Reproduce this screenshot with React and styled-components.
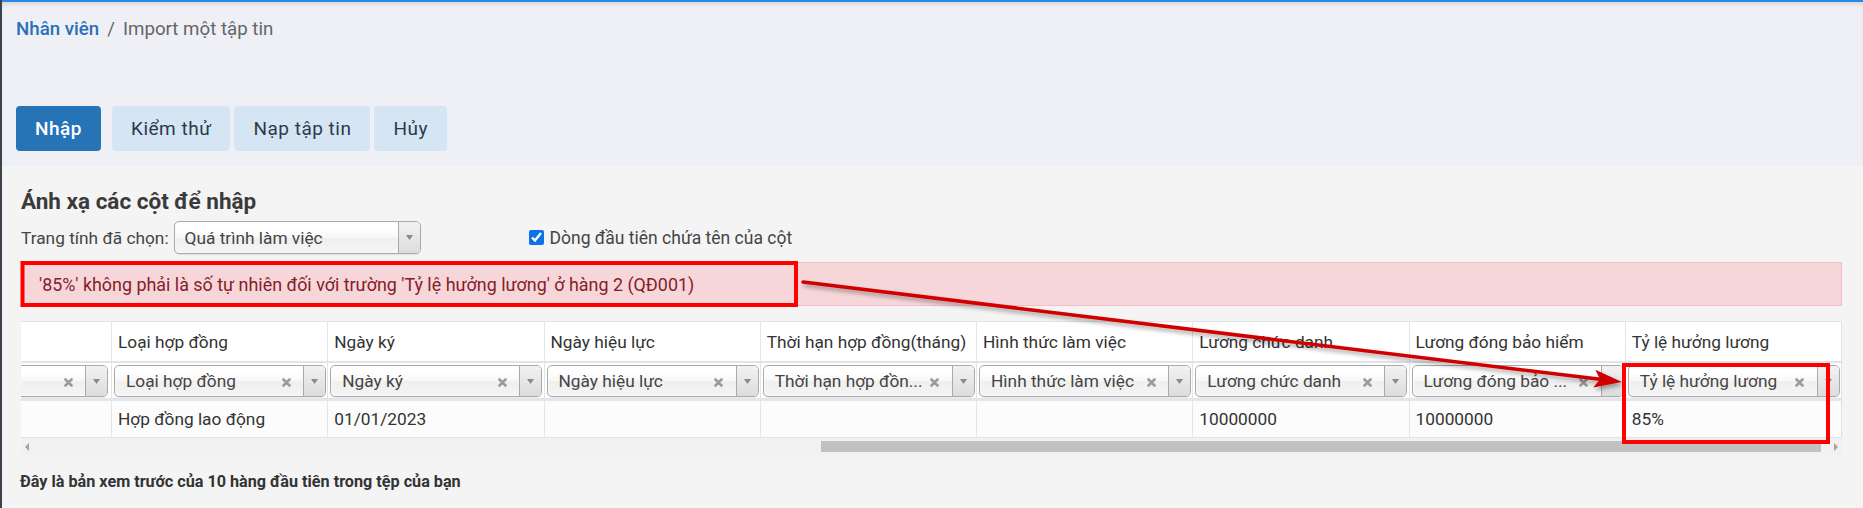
import React from 'react';
import styled, { createGlobalStyle } from 'styled-components';

const GlobalStyle = createGlobalStyle`
  html, body { margin: 0; padding: 0; }
  body {
    width: 1863px;
    height: 508px;
    overflow: hidden;
    background: #f4f4f4;
    font-family: Roboto, "Noto Sans", "Liberation Sans", sans-serif;
    color: #333;
  }
  * { box-sizing: border-box; }
`;

const Page = styled.div`
  position: relative;
  height: 508px;
  border-left: 2px solid #3b434d;
  display: flex;
  flex-direction: column;
`;

const Header = styled.header`
  height: 166px;
  background: #eef0f5;
  border-top: 2px solid #2b8be4;
  box-shadow: inset 0 4px 4px -2px rgba(0, 0, 0, 0.12);
  padding: 16px 14px 15px;
  display: flex;
  flex-direction: column;
`;

const Breadcrumb = styled.nav`
  height: 22px;
  line-height: 22px;
  font-size: 18.7px;
  color: #666;
  display: flex;
  gap: 8px;

  & > a {
    color: #2a70b8;
    text-decoration: none;
    font-weight: 500;
  }
`;

const Toolbar = styled.div`
  margin-top: auto;
  display: flex;
  gap: 4px;
`;

const Button = styled.button`
  height: 45px;
  padding: 0 19px;
  border: 0;
  border-radius: 4px;
  font-family: inherit;
  font-size: 19px;
  letter-spacing: 0.5px;
  background: ${p => p.$primary ? '#2673b6' : '#d5e5f3'};
  color: ${p => p.$primary ? '#fff' : '#2c3a4a'};
  font-weight: ${p => p.$primary ? 500 : 400};
  margin-right: ${p => p.$primary ? '7px' : '0'};
`;

const Main = styled.main`
  flex: 1;
  background: #f4f4f4;
  padding: 22px 21px 0 19px;
`;

const Title = styled.h2`
  margin: 0;
  font-size: 22.5px;
  line-height: 27px;
  font-weight: 700;
  color: #3a3a3a;
`;

const SheetRow = styled.div`
  margin-top: 6px;
  height: 33px;
  display: flex;
  align-items: center;
  font-size: 17.3px;
  color: #444;
`;

const SheetLabel = styled.label`
  margin-right: 5px;
`;

const CheckLabel = styled.label`
  margin-left: 108px;
  display: flex;
  align-items: center;
  gap: 6px;
  font-size: 17.5px;

  & > input {
    margin: 0;
    width: 15px;
    height: 15px;
    accent-color: #0b72e7;
  }
`;

const SelectBox = styled.div`
  flex-shrink: 0;
  width: ${p => p.$width}px;
  height: ${p => p.$height}px;
  border: 1px solid #aaa;
  border-radius: 5px;
  background: linear-gradient(#fff 20%, #f7f7f7 50%, #efefef 52%, #f5f5f5);
  box-shadow: inset 0 0 3px #fff, 0 1px 1px rgba(0, 0, 0, 0.08);
  display: flex;
  align-items: center;
  font-size: 17.3px;
  color: #444;
  overflow: hidden;
`;

const SelectText = styled.span`
  flex: 1;
  min-width: 0;
  padding-left: ${p => p.$pad}px;
  white-space: nowrap;
`;

const Clear = styled.span`
  width: 34px;
  flex-shrink: 0;
  display: flex;
  justify-content: center;
  padding-top: 3px;
`;

const Caret = styled.span`
  width: 22px;
  flex-shrink: 0;
  align-self: stretch;
  border-left: 1px solid #aaa;
  background: linear-gradient(#f2f2f2, #dcdcdc);
  display: flex;
  align-items: center;
  justify-content: center;
`;

const Alert = styled.div`
  position: relative;
  margin-top: 8px;
  height: 44px;
  background: #f7d6d9;
  border: 1px solid #f3bfc4;
  color: #842029;
  padding: 0 17px;
  display: flex;
  align-items: center;
  font-size: 17.9px;
`;

const Table = styled.div`
  margin-top: 15px;
  display: grid;
  grid-template-columns: 90px repeat(8, 1fr);
  border-top: 1px solid #dfe2e7;
  border-right: 1px solid #dfe2e7;
  font-size: 17.3px;
  color: #333;
`;

const Cell = styled.div`
  display: flex;
  overflow: hidden;
  white-space: nowrap;
  border-left: ${p => p.$first ? '0' : '1px solid #e1e4e8'};
  ${p => p.$kind === 'head' && `
    height: 41px;
    align-items: center;
    padding-left: 6px;
    background: #fff;
    border-bottom: 2px solid #e1e4e8;
  `}
  ${p => p.$kind === 'select' && `
    height: 38px;
    align-items: flex-start;
    padding: 2px 3px 0 2px;
    justify-content: ${p.$first ? 'flex-end' : 'flex-start'};
    background: #fff;
    border-bottom: 3px solid #e3e6ea;
  `}
  ${p => p.$kind === 'data' && `
    height: 37px;
    align-items: center;
    padding-left: 6px;
    background: #fcfcfc;
    border-bottom: 1px solid #e1e4e8;
  `}
`;

const Scrollbar = styled.div`
  height: 17px;
  background: #f1f1f1;
  display: flex;
  align-items: center;
  padding: 0 4px;
`;

const ScrollArrow = styled.span`
  width: 0;
  height: 0;
  border-top: 4px solid transparent;
  border-bottom: 4px solid transparent;
  ${p => p.$dir === 'left'
    ? 'border-right: 4px solid #a3a3a3;'
    : 'border-left: 4px solid #a3a3a3; margin-left: auto;'}
`;

const Thumb = styled.span`
  height: 11px;
  background: #c1c1c1;
`;

const Footnote = styled.p`
  margin: 16px 0 0 -1px;
  font-size: 16.2px;
  line-height: 22px;
  font-weight: 700;
  color: #333;
`;

const Overlay = styled.svg`
  position: absolute;
  left: -2px;
  top: 0;
  pointer-events: none;
`;

const ClearIcon = () => (
  <svg width="9" height="9" viewBox="0 0 9 9">
    <path d="M1.5 1.5 L7.5 7.5 M7.5 1.5 L1.5 7.5" stroke="#9a9a9a" strokeWidth="2.6" strokeLinecap="round" />
  </svg>
);

const CaretIcon = () => (
  <svg width="7" height="5" viewBox="0 0 7 5">
    <path d="M0 0 H7 L3.5 5 Z" fill="#8a8a8a" />
  </svg>
);

const Select = ({ value, width, height, pad = 11, clearable }) => (
  <SelectBox $width={width} $height={height}>
    <SelectText $pad={pad}>{value}</SelectText>
    {clearable ? <Clear><ClearIcon /></Clear> : null}
    <Caret><CaretIcon /></Caret>
  </SelectBox>
);

// field labels are shortened the way the select widget shows them
const columns = [
  { head: '', field: '', value: '' },
  { head: 'Loại hợp đồng', field: 'Loại hợp đồng', value: 'Hợp đồng lao động' },
  { head: 'Ngày ký', field: 'Ngày ký', value: '01/01/2023' },
  { head: 'Ngày hiệu lực', field: 'Ngày hiệu lực', value: '' },
  { head: 'Thời hạn hợp đồng(tháng)', field: 'Thời hạn hợp đồn...', value: '' },
  { head: 'Hình thức làm việc', field: 'Hình thức làm việc', value: '' },
  { head: 'Lương chức danh', field: 'Lương chức danh', value: '10000000' },
  { head: 'Lương đóng bảo hiểm', field: 'Lương đóng bảo ...', value: '10000000' },
  { head: 'Tỷ lệ hưởng lương', field: 'Tỷ lệ hưởng lương', value: '85%' },
];

// scroll position of the preview grid (track 1821px wide)
const scroll = { offset: 792, size: 1000 };

const arrowTip = [1622, 382];
const arrowStart = [803, 282];

const Annotations = () => {
  const dx = arrowTip[0] - arrowStart[0];
  const dy = arrowTip[1] - arrowStart[1];
  const len = Math.hypot(dx, dy);
  const ux = dx / len, uy = dy / len;
  const bx = arrowTip[0] - ux * 28, by = arrowTip[1] - uy * 28;
  const head = [
    arrowTip,
    [bx - uy * 9, by + ux * 9],
    [bx + ux * 6, by + uy * 6],
    [bx + uy * 9, by - ux * 9],
  ].map(p => p.join(',')).join(' ');

  return (
    <Overlay width="1863" height="508" viewBox="0 0 1863 508">
      <defs>
        <filter id="shadow" x="-10%" y="-50%" width="120%" height="200%">
          <feDropShadow dx="2" dy="3" stdDeviation="2" floodColor="#000" floodOpacity="0.35" />
        </filter>
      </defs>
      <rect x="22.5" y="263" width="773.5" height="42" fill="none" stroke="#ff0000" strokeWidth="4" />
      <rect x="1624" y="365" width="204" height="77" fill="none" stroke="#ff0000" strokeWidth="4" />
      <g filter="url(#shadow)">
        <line x1={arrowStart[0]} y1={arrowStart[1]} x2={bx + ux * 8} y2={by + uy * 8} stroke="#d00000" strokeWidth="3.5" strokeLinecap="round" />
        <polygon points={head} fill="#d00000" />
      </g>
    </Overlay>
  );
};

const App = () => (
  <>
    <GlobalStyle />
    <Page>
      <Header>
        <Breadcrumb>
          <a href="#">Nhân viên</a>
          <span>/</span>
          <span>Import một tập tin</span>
        </Breadcrumb>
        <Toolbar>
          <Button $primary>Nhập</Button>
          <Button>Kiểm thử</Button>
          <Button>Nạp tập tin</Button>
          <Button>Hủy</Button>
        </Toolbar>
      </Header>
      <Main>
        <Title>Ánh xạ các cột để nhập</Title>
        <SheetRow>
          <SheetLabel>Trang tính đã chọn:</SheetLabel>
          <Select value="Quá trình làm việc" width={247} height={33} pad={10} />
          <CheckLabel>
            <input type="checkbox" defaultChecked />
            Dòng đầu tiên chứa tên của cột
          </CheckLabel>
        </SheetRow>
        <Alert>'85%' không phải là số tự nhiên đối với trường 'Tỷ lệ hưởng lương' ở hàng 2 (QĐ001)</Alert>
        <Table>
          {columns.map((c, i) => (
            <Cell key={'h' + i} $kind="head" $first={i === 0}>{c.head}</Cell>
          ))}
          {columns.map((c, i) => (
            <Cell key={'s' + i} $kind="select" $first={i === 0}>
              <Select value={c.field} width={212} height={32} clearable />
            </Cell>
          ))}
          {columns.map((c, i) => (
            <Cell key={'d' + i} $kind="data" $first={i === 0}>{c.value}</Cell>
          ))}
        </Table>
        <Scrollbar>
          <ScrollArrow $dir="left" />
          <Thumb style={{ marginLeft: scroll.offset, width: scroll.size }} />
          <ScrollArrow $dir="right" />
        </Scrollbar>
        <Footnote>Đây là bản xem trước của 10 hàng đầu tiên trong tệp của bạn</Footnote>
      </Main>
      <Annotations />
    </Page>
  </>
);

export default App;
